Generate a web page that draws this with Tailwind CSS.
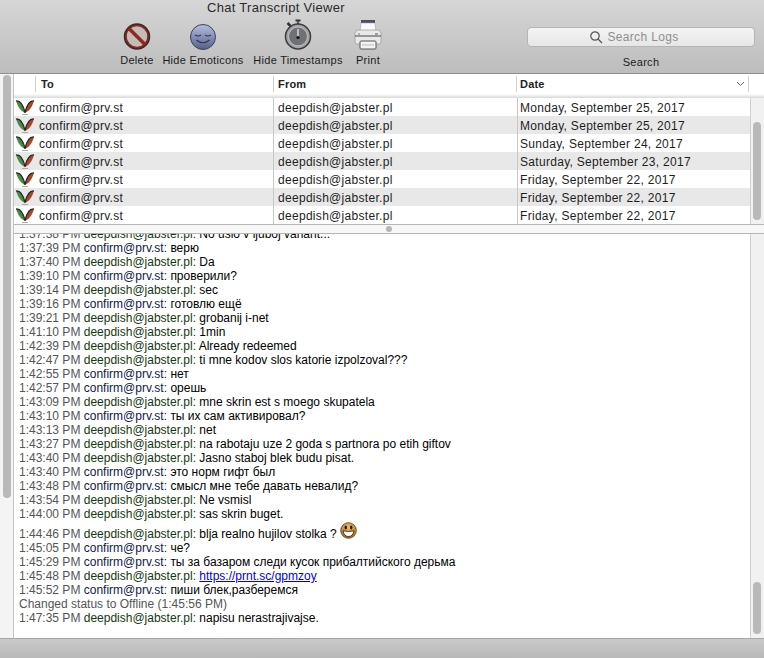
<!DOCTYPE html>
<html lang="en">
<head>
  <meta charset="UTF-8" />
  <title>Chat Transcript Viewer</title>
  <script src="https://cdn.jsdelivr.net/npm/@tailwindcss/browser@4"></script>
</head>
<body class="bg-white">
  <svg width="0" height="0" class="absolute">
    <defs>
      <symbol id="adium" viewBox="0 0 20 18">
        <path d="M1 3C5 2.500 8 6 10.500 15C6.500 14 3 9.500 1 3Z" fill="#4d8a3f"/>
        <path d="M19 3C15 2.500 12 6 9.500 15C13.500 14 17 9.500 19 3Z" fill="#a8452c"/>
        <path d="M1 3C5 2.500 8 6 10 14.500M19 3C15 2.500 12 6 10 14.500" fill="none" stroke="#23282a" stroke-width="1.200"/>
        <path d="M7 16.500H13" stroke="#9fb59a" stroke-width="1"/>
      </symbol>
    </defs>
  </svg>
  <div class="flex flex-col w-[764px] h-[658px] overflow-hidden font-['Liberation_Sans',sans-serif] text-[12px] text-black">
    <!-- toolbar -->
    <div class="h-[74px] shrink-0 bg-gradient-to-b from-[#d6d6d6] to-[#bdbdbd] border-b border-[#8f8f8f]">
      <div class="h-[15px] pt-px pl-[207px] text-[13px] leading-[14px] tracking-[0.3px] text-[#2a2a2a]">Chat Transcript Viewer</div>
      <div class="flex pt-[4px] h-[58px]">
        <div class="flex ml-[112px] w-[290px]">
          <div class="flex flex-col items-center w-[50px]">
            <svg width="30" height="32" viewBox="0 0 30 32"><circle cx="15" cy="17.500" r="12" fill="#c2bdb9" stroke="#3a2a28" stroke-width="2.500"/><circle cx="15" cy="17.500" r="11" fill="none" stroke="#8a2a20" stroke-width="1.500"/><path d="M7 9.500L23 25.500" stroke="#8f2a1e" stroke-width="3.500"/></svg>
            <span class="mt-[3px] text-[11px] leading-[13px] tracking-[0.3px] text-[#1c1c1c] whitespace-nowrap">Delete</span>
          </div>
          <div class="flex flex-col items-center w-[82px]">
            <svg width="30" height="32" viewBox="0 0 30 32"><defs><linearGradient id="e" x1="0" y1="0" x2="0" y2="1"><stop offset="0" stop-color="#b4bfe2"/><stop offset="1" stop-color="#565f88"/></linearGradient></defs><circle cx="15" cy="18" r="12.500" fill="url(#e)" stroke="#3c4258" stroke-width="1"/><path d="M7 16Q10 18 13 16M17 16Q20 18 23 16M8.500 21Q15 26.500 21.500 21" fill="none" stroke="#2e3550" stroke-width="1.200"/></svg>
            <span class="mt-[3px] text-[11px] leading-[13px] tracking-[0.3px] text-[#1c1c1c] whitespace-nowrap">Hide Emoticons</span>
          </div>
          <div class="flex flex-col items-center w-[96px] ml-[6px]">
            <svg width="30" height="32" viewBox="0 0 30 32"><rect x="12.500" y="0.500" width="5" height="2" fill="#333"/><rect x="14" y="2" width="2" height="3" fill="#555"/><path d="M4.500 4L7.500 7" stroke="#333" stroke-width="2.500"/><circle cx="15" cy="17.500" r="12.500" fill="#a3a3a3" stroke="#3b3b3b" stroke-width="1.500"/><circle cx="15" cy="17.500" r="9.500" fill="#6e7276" stroke="#c4c4c4" stroke-width="1"/><path d="M15 10V18" stroke="#eee" stroke-width="1.200"/><circle cx="15" cy="18.500" r="1.600" fill="#111"/></svg>
            <span class="mt-[3px] text-[11px] leading-[13px] tracking-[0.3px] text-[#1c1c1c] whitespace-nowrap">Hide Timestamps</span>
          </div>
          <div class="flex flex-col items-center w-[44px]">
            <svg width="30" height="32" viewBox="0 0 30 32"><rect x="8" y="1" width="14" height="4" fill="#4a5068"/><path d="M8 4H22L23 14H7Z" fill="#fafafa" stroke="#999" stroke-width="0.500"/><path d="M2 14Q2 11 6 11H24Q28 11 28 14V23Q28 25 26 25H4Q2 25 2 23Z" fill="#e9e9e9" stroke="#8a8a8a" stroke-width="0.600"/><path d="M2 17H28" stroke="#444" stroke-width="1"/><rect x="5" y="14.500" width="2" height="1" fill="#b5651d"/><rect x="22" y="14.500" width="3" height="1" fill="#555"/><rect x="7" y="22" width="16" height="8" rx="1" fill="#f4f4f4" stroke="#555" stroke-width="1"/><path d="M9 26H21" stroke="#bbb" stroke-width="1"/></svg>
            <span class="mt-[3px] text-[11px] leading-[13px] tracking-[0.3px] text-[#1c1c1c] whitespace-nowrap">Print</span>
          </div>
        </div>
        <div class="ml-[125px] w-[228px] pt-[8px] flex flex-col items-center">
          <div class="w-full h-[20px] rounded-[4px] bg-gradient-to-b from-[#f4f4f4] to-[#e6e6e6] border border-[#b5b5b5] flex items-center justify-center gap-[4px] pr-[14px]">
            <svg width="14" height="14" viewBox="0 0 14 14" fill="none" stroke="#555" stroke-width="1.200"><circle cx="6" cy="6" r="4.200"/><path d="M9 9L13 13"/></svg>
            <span class="text-[12px] leading-[14px] tracking-[0.35px] text-[#8e8e8e]">Search Logs</span>
          </div>
          <span class="mt-[9px] text-[11px] leading-[13px] tracking-[0.3px] text-[#1c1c1c]">Search</span>
        </div>
      </div>
    </div>

    <div class="flex flex-1 min-h-0">
      <!-- left scroller -->
      <div class="w-[14px] shrink-0 bg-[#f4f4f4] border-r border-[#c4c4c4] pt-[1px] pl-[3px]">
        <div class="w-[8px] h-[423px] rounded-full bg-[#b9b9b9]"></div>
      </div>
      <div class="flex-1 min-w-0 flex flex-col">
        <!-- column header -->
        <div class="flex h-[20px] shrink-0 items-center text-[11px] font-bold tracking-[0.2px] text-[#222]">
          <div class="w-[22px] h-[16px] border-r border-[#cfcfcf]"></div>
          <div class="w-[238px] h-[16px] leading-[16px] pl-[5px] border-r border-[#cfcfcf]">To</div>
          <div class="w-[243px] h-[16px] leading-[16px] pl-[4px] border-r border-[#cfcfcf]">From</div>
          <div class="w-[232px] h-[16px] leading-[16px] pl-[3px] pr-[3px] flex items-center justify-between border-r border-[#cfcfcf]">Date
            <svg width="9" height="6" viewBox="0 0 9 6" fill="none" stroke="#666" stroke-width="1"><path d="M1 1L4.500 4.500L8 1"/></svg>
          </div>
        </div>
        <div class="h-[4px] shrink-0 bg-gradient-to-b from-white to-[#d8d8d8]"></div>
        <!-- list -->
        <div class="flex h-[126px] shrink-0">
          <div class="flex-1 min-w-0 text-[12px] leading-[20px] tracking-[0.3px] text-[#1e1e1e]">
            <div class="flex h-[18px] bg-white"><svg width="20" height="18" class="mx-[1px] shrink-0"><use href="#adium"/></svg><div class="w-[238px] pl-[3px] border-r border-[#c8c8c8]">confirm@prv.st</div><div class="w-[244px] pl-[4px] border-r border-[#c8c8c8]">deepdish@jabster.pl</div><div class="pl-[2px]">Monday, September 25, 2017</div></div>
            <div class="flex h-[18px] bg-[#e8e8e8]"><svg width="20" height="18" class="mx-[1px] shrink-0"><use href="#adium"/></svg><div class="w-[238px] pl-[3px] border-r border-[#c8c8c8]">confirm@prv.st</div><div class="w-[244px] pl-[4px] border-r border-[#c8c8c8]">deepdish@jabster.pl</div><div class="pl-[2px]">Monday, September 25, 2017</div></div>
            <div class="flex h-[18px] bg-white"><svg width="20" height="18" class="mx-[1px] shrink-0"><use href="#adium"/></svg><div class="w-[238px] pl-[3px] border-r border-[#c8c8c8]">confirm@prv.st</div><div class="w-[244px] pl-[4px] border-r border-[#c8c8c8]">deepdish@jabster.pl</div><div class="pl-[2px]">Sunday, September 24, 2017</div></div>
            <div class="flex h-[18px] bg-[#e8e8e8]"><svg width="20" height="18" class="mx-[1px] shrink-0"><use href="#adium"/></svg><div class="w-[238px] pl-[3px] border-r border-[#c8c8c8]">confirm@prv.st</div><div class="w-[244px] pl-[4px] border-r border-[#c8c8c8]">deepdish@jabster.pl</div><div class="pl-[2px]">Saturday, September 23, 2017</div></div>
            <div class="flex h-[18px] bg-white"><svg width="20" height="18" class="mx-[1px] shrink-0"><use href="#adium"/></svg><div class="w-[238px] pl-[3px] border-r border-[#c8c8c8]">confirm@prv.st</div><div class="w-[244px] pl-[4px] border-r border-[#c8c8c8]">deepdish@jabster.pl</div><div class="pl-[2px]">Friday, September 22, 2017</div></div>
            <div class="flex h-[18px] bg-[#e8e8e8]"><svg width="20" height="18" class="mx-[1px] shrink-0"><use href="#adium"/></svg><div class="w-[238px] pl-[3px] border-r border-[#c8c8c8]">confirm@prv.st</div><div class="w-[244px] pl-[4px] border-r border-[#c8c8c8]">deepdish@jabster.pl</div><div class="pl-[2px]">Friday, September 22, 2017</div></div>
            <div class="flex h-[18px] bg-white"><svg width="20" height="18" class="mx-[1px] shrink-0"><use href="#adium"/></svg><div class="w-[238px] pl-[3px] border-r border-[#c8c8c8]">confirm@prv.st</div><div class="w-[244px] pl-[4px] border-r border-[#c8c8c8]">deepdish@jabster.pl</div><div class="pl-[2px]">Friday, September 22, 2017</div></div>
          </div>
          <div class="w-[14px] shrink-0 bg-[#f1f1f1] border-l border-[#d0d0d0] pl-[2px]">
            <div class="w-[8px] h-[98px] mt-[24px] rounded-full bg-[#b9b9b9]"></div>
          </div>
        </div>
        <!-- splitter -->
        <div class="h-[10px] shrink-0 bg-[#f7f7f7] border-y border-[#b5b5b5] flex items-center justify-center">
          <div class="w-[6px] h-[6px] rounded-full bg-[#b5b5b5]"></div>
        </div>
        <!-- log pane -->
        <div class="flex flex-1 min-h-0">
          <div class="flex-1 min-w-0 overflow-hidden pl-[5px] leading-[14px] text-[#555]">
            <div class="-mt-[7px]">
              <div class="h-[14px] whitespace-nowrap">1:37:38 PM <span class="text-[#14380f]">deepdish@jabster.pl:</span> <span class="text-black">No uslo v ljuboj variant...</span></div>
              <div class="h-[14px] whitespace-nowrap">1:37:39 PM <span class="text-[#0f1a4a]">confirm@prv.st:</span> <span class="text-black">верю</span></div>
              <div class="h-[14px] whitespace-nowrap">1:37:40 PM <span class="text-[#14380f]">deepdish@jabster.pl:</span> <span class="text-black">Da</span></div>
              <div class="h-[14px] whitespace-nowrap">1:39:10 PM <span class="text-[#0f1a4a]">confirm@prv.st:</span> <span class="text-black">проверили?</span></div>
              <div class="h-[14px] whitespace-nowrap">1:39:14 PM <span class="text-[#14380f]">deepdish@jabster.pl:</span> <span class="text-black">sec</span></div>
              <div class="h-[14px] whitespace-nowrap">1:39:16 PM <span class="text-[#0f1a4a]">confirm@prv.st:</span> <span class="text-black">готовлю ещё</span></div>
              <div class="h-[14px] whitespace-nowrap">1:39:21 PM <span class="text-[#14380f]">deepdish@jabster.pl:</span> <span class="text-black">grobanij i-net</span></div>
              <div class="h-[14px] whitespace-nowrap">1:41:10 PM <span class="text-[#14380f]">deepdish@jabster.pl:</span> <span class="text-black">1min</span></div>
              <div class="h-[14px] whitespace-nowrap">1:42:39 PM <span class="text-[#14380f]">deepdish@jabster.pl:</span> <span class="text-black">Already redeemed</span></div>
              <div class="h-[14px] whitespace-nowrap">1:42:47 PM <span class="text-[#14380f]">deepdish@jabster.pl:</span> <span class="text-black">ti mne kodov slos katorie izpolzoval???</span></div>
              <div class="h-[14px] whitespace-nowrap">1:42:55 PM <span class="text-[#0f1a4a]">confirm@prv.st:</span> <span class="text-black">нет</span></div>
              <div class="h-[14px] whitespace-nowrap">1:42:57 PM <span class="text-[#0f1a4a]">confirm@prv.st:</span> <span class="text-black">орешь</span></div>
              <div class="h-[14px] whitespace-nowrap">1:43:09 PM <span class="text-[#14380f]">deepdish@jabster.pl:</span> <span class="text-black">mne skrin est s moego skupatela</span></div>
              <div class="h-[14px] whitespace-nowrap">1:43:10 PM <span class="text-[#0f1a4a]">confirm@prv.st:</span> <span class="text-black">ты их сам активировал?</span></div>
              <div class="h-[14px] whitespace-nowrap">1:43:13 PM <span class="text-[#14380f]">deepdish@jabster.pl:</span> <span class="text-black">net</span></div>
              <div class="h-[14px] whitespace-nowrap">1:43:27 PM <span class="text-[#14380f]">deepdish@jabster.pl:</span> <span class="text-black">na rabotaju uze 2 goda s partnora po etih giftov</span></div>
              <div class="h-[14px] whitespace-nowrap">1:43:40 PM <span class="text-[#14380f]">deepdish@jabster.pl:</span> <span class="text-black">Jasno staboj blek budu pisat.</span></div>
              <div class="h-[14px] whitespace-nowrap">1:43:40 PM <span class="text-[#0f1a4a]">confirm@prv.st:</span> <span class="text-black">это норм гифт был</span></div>
              <div class="h-[14px] whitespace-nowrap">1:43:48 PM <span class="text-[#0f1a4a]">confirm@prv.st:</span> <span class="text-black">смысл мне тебе давать невалид?</span></div>
              <div class="h-[14px] whitespace-nowrap">1:43:54 PM <span class="text-[#14380f]">deepdish@jabster.pl:</span> <span class="text-black">Ne vsmisl</span></div>
              <div class="h-[14px] whitespace-nowrap">1:44:00 PM <span class="text-[#14380f]">deepdish@jabster.pl:</span> <span class="text-black">sas skrin buget.</span></div>
              <div class="h-[20px] pt-[6px] whitespace-nowrap">1:44:46 PM <span class="text-[#14380f]">deepdish@jabster.pl:</span> <span class="text-black">blja realno hujilov stolka ?</span> <svg width="17" height="17" viewBox="0 0 17 17" class="inline-block align-[-1px] -mt-[8px]"><defs><radialGradient id="s" cx="0.500" cy="0.300" r="0.750"><stop offset="0" stop-color="#ecc05a"/><stop offset="1" stop-color="#a8671c"/></radialGradient></defs><circle cx="8.500" cy="8.500" r="7.800" fill="url(#s)" stroke="#5a3a10" stroke-width="0.800"/><ellipse cx="5.800" cy="5.500" rx="1.200" ry="1.900" fill="#2a1a08"/><ellipse cx="11.200" cy="5.500" rx="1.200" ry="1.900" fill="#2a1a08"/><path d="M3 8.800Q8.500 10.300 14 8.800Q13.200 14.500 8.500 14.500Q3.800 14.500 3 8.800Z" fill="#fff" stroke="#2a1a08" stroke-width="0.800"/></svg></div>
              <div class="h-[14px] whitespace-nowrap">1:45:05 PM <span class="text-[#0f1a4a]">confirm@prv.st:</span> <span class="text-black">че?</span></div>
              <div class="h-[14px] whitespace-nowrap">1:45:29 PM <span class="text-[#0f1a4a]">confirm@prv.st:</span> <span class="text-black">ты за базаром следи кусок прибалтийского дерьма</span></div>
              <div class="h-[14px] whitespace-nowrap">1:45:48 PM <span class="text-[#14380f]">deepdish@jabster.pl:</span> <a href="#" class="text-[#0000ee] underline">https://prnt.sc/gpmzoy</a></div>
              <div class="h-[14px] whitespace-nowrap">1:45:52 PM <span class="text-[#0f1a4a]">confirm@prv.st:</span> <span class="text-black">пиши блек,разберемся</span></div>
              <div class="h-[14px] whitespace-nowrap">Changed status to Offline (1:45:56 PM)</div>
              <div class="h-[14px] whitespace-nowrap">1:47:35 PM <span class="text-[#14380f]">deepdish@jabster.pl:</span> <span class="text-black">napisu nerastrajivajse.</span></div>
            </div>
          </div>
          <div class="w-[14px] shrink-0 bg-[#f1f1f1] border-l border-[#d0d0d0] pl-[2px] flex flex-col justify-end pb-[4px]">
            <div class="w-[8px] h-[52px] rounded-full bg-[#b9b9b9]"></div>
          </div>
        </div>
      </div>
    </div>
    <!-- bottom bar -->
    <div class="h-[20px] shrink-0 bg-gradient-to-b from-[#c9c9c9] to-[#b9b9b9] border-t border-[#a8a8a8]"></div>
  </div>
</body>
</html>
